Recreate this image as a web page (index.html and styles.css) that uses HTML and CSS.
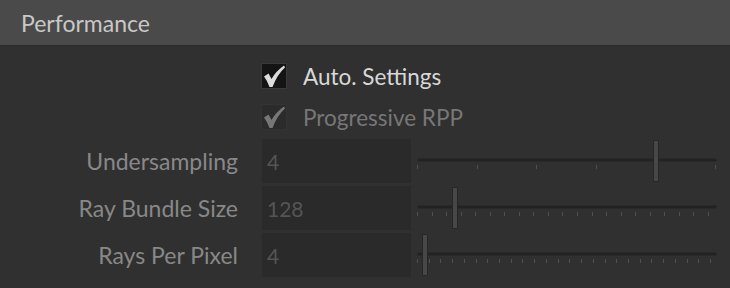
FILE: index.html
```html
<!DOCTYPE html>
<html lang="en">
    <head>
        <meta charset="UTF-8">
        <title>Performance</title>
        <link rel="stylesheet" href="styles.css">
    </head>
    <body>
        <div class="panel">
            <div class="panel-header">Performance</div>

            <div class="panel-body">
                <!-- checkboxes -->
                <div class="check-list">
                    <label class="check-row">
                        <span class="check-box">
                            <svg viewBox="0 0 24 24" width="24" height="24"><path d="M2 12.5 L6.5 9.5 L9.5 15 Q14 7 22 1.5 L23 3.5 Q15.5 10 10.5 23 L7.5 23 Q5.5 17 2 12.5 Z"/></svg>
                        </span>
                        <span class="check-text">Auto. Settings</span>
                    </label>
                    <label class="check-row disabled">
                        <span class="check-box">
                            <svg viewBox="0 0 24 24" width="24" height="24"><path d="M2 12.5 L6.5 9.5 L9.5 15 Q14 7 22 1.5 L23 3.5 Q15.5 10 10.5 23 L7.5 23 Q5.5 17 2 12.5 Z"/></svg>
                        </span>
                        <span class="check-text">Progressive RPP</span>
                    </label>
                </div>

                <!-- sliders -->
                <div class="field-list">
                    <div class="field-row">
                        <span class="field-label">Undersampling</span>
                        <span class="field-input">4</span>
                        <div class="slider">
                            <div class="slider-track"></div>
                            <div class="slider-ticks ticks-a">
                                <i></i><i></i><i></i><i></i><i></i><i></i>
                            </div>
                            <div class="slider-handle" style="left: 236px"></div>
                        </div>
                    </div>
                    <div class="field-row">
                        <span class="field-label">Ray Bundle Size</span>
                        <span class="field-input">128</span>
                        <div class="slider">
                            <div class="slider-track"></div>
                            <div class="slider-ticks ticks-b">
                                <i></i><i></i><i></i><i></i><i></i><i></i><i></i>
                                <i></i><i></i><i></i><i></i><i></i><i></i><i></i>
                                <i></i><i></i><i></i><i></i><i></i><i></i><i></i>
                            </div>
                            <div class="slider-handle" style="left: 35px"></div>
                        </div>
                    </div>
                    <div class="field-row">
                        <span class="field-label">Rays Per Pixel</span>
                        <span class="field-input">4</span>
                        <div class="slider">
                            <div class="slider-track"></div>
                            <div class="slider-ticks ticks-c">
                                <i></i><i></i><i></i><i></i><i></i><i></i><i></i><i></i><i></i>
                                <i></i><i></i><i></i><i></i><i></i><i></i><i></i><i></i><i></i>
                                <i></i><i></i><i></i><i></i><i></i><i></i><i></i><i></i>
                            </div>
                            <div class="slider-handle" style="left: 5px"></div>
                        </div>
                    </div>
                </div>
            </div>
        </div>
    </body>
</html>
```

FILE: styles.css
```css
body {
    margin: 0;
    background-color: #303030;
    font-family: Lato, "Open Sans", sans-serif;
    width: 730px;
    height: 288px;
    overflow: hidden;
}

.panel-header {
    height: 45px;
    background-color: #4a4a4a;
    border-bottom: 1px solid #2a2a2a;
    color: #c8c8c8;
    font-size: 23px;
    display: flex;
    align-items: center;
    padding-left: 21px;
}

.panel-body {
    padding-top: 17px;
}

.check-list {
    display: flex;
    flex-direction: column;
    gap: 15px;
    margin-bottom: 9px;
}

.check-row {
    display: flex;
    align-items: center;
    gap: 16px;
    height: 26px;
    margin-left: 261px;
    font-size: 22.5px;
    color: #d8d8d8;
}

.check-box {
    width: 24px;
    height: 24px;
    border: 1px solid #3a3a3a;
    background-color: #141414;
}

.check-box svg {
    display: block;
    fill: #dcdcdc;
}

.check-row.disabled {
    color: #777;
}

.disabled .check-box {
    background-color: #2b2b2b;
    border-color: #333;
}

.disabled .check-box svg {
    fill: #777;
}

.field-list {
    display: flex;
    flex-direction: column;
    gap: 3px;
}

.field-row {
    display: grid;
    grid-template-columns: 262px 149px 1fr;
    height: 44px;
}

.field-label {
    align-self: center;
    text-align: right;
    padding-right: 24px;
    font-size: 23px;
    color: #888;
}

.field-input {
    display: flex;
    align-items: center;
    padding-left: 5px;
    background-color: #2a2a2a;
    color: #555;
    font-size: 21px;
}

.slider {
    position: relative;
    margin-left: 6px;
}

.slider-track {
    margin-top: 19px;
    width: 298px;
    height: 2px;
    background-color: #222;
    border: 1px solid #292929;
    border-radius: 3px;
}

.slider-ticks {
    display: flex;
    justify-content: space-between;
    margin-top: 3px;
}

.slider-ticks i {
    width: 1px;
    height: 4px;
    background-color: #4f4f4f;
}

.ticks-a {
    width: 299px;
}

.ticks-b {
    width: 292px;
}

.ticks-c {
    width: 294px;
}

.slider-handle {
    position: absolute;
    top: 1px;
    width: 6px;
    height: 42px;
    box-sizing: border-box;
    background-color: #474747;
    border: 1px solid #262626;
    border-radius: 1px;
}
```
